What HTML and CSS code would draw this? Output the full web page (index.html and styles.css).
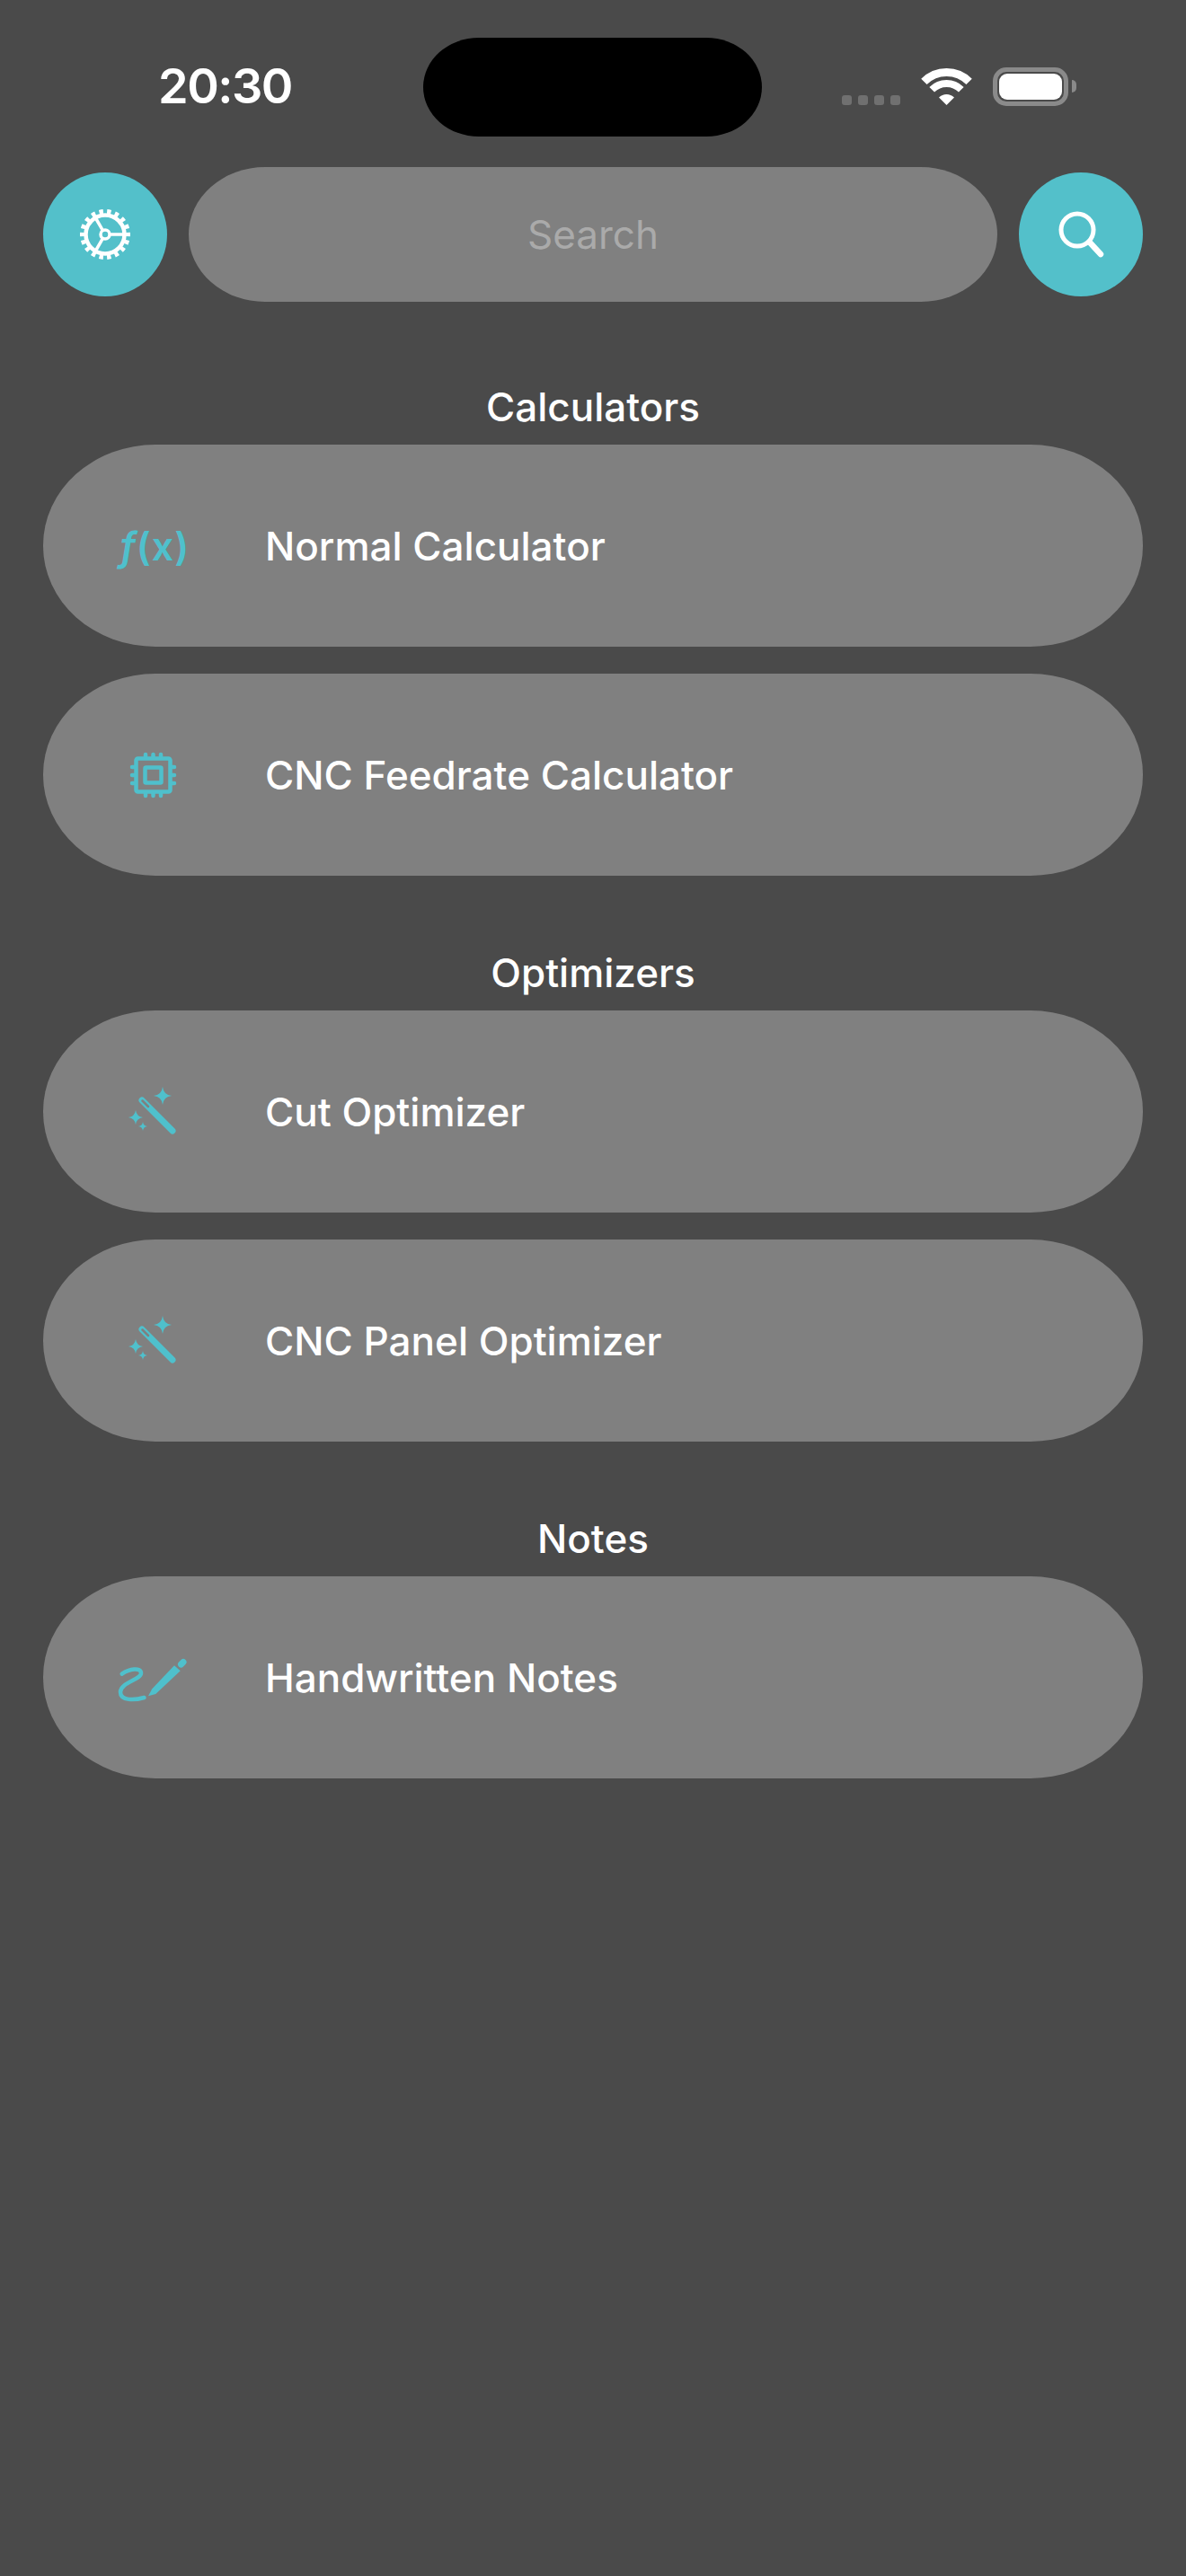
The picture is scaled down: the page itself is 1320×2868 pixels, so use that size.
FILE: index.html
```html
<!doctype html>
<html lang="en">
<head>
    <title>Tools</title>
    <link rel="stylesheet" href="styles.css">
</head>
<body>
    <div class="status-bar">
        <div class="time">20:30</div>
        <div class="island"></div>
        <div class="status-icons">
            <div class="signal"><span></span><span></span><span></span><span></span></div>
            <svg class="wifi" width="57" height="42" viewBox="0 0 57 42">
                <path d="M3.4 15.9A35.5 35.5 0 0 1 53.6 15.9" fill="none" stroke="#fff" stroke-width="9"/>
                <path d="M12.2 24.7A23 23 0 0 1 44.8 24.7" fill="none" stroke="#fff" stroke-width="8"/>
                <path d="M28.5 42L20 33.5A12 12 0 0 1 37 33.5Z" fill="#fff"/>
            </svg>
            <div class="battery"><div class="battery-fill"></div></div>
            <div class="battery-nub"></div>
        </div>
    </div>

    <div class="toolbar">
        <button class="round-btn">
            <svg width="60" height="60" viewBox="-30 -30 60 60" fill="none" stroke="#fff">
                <circle r="21.5" stroke-width="4.5"/>
                <circle r="25.5" stroke-width="5" pathLength="36" stroke-dasharray="1 1" stroke-dashoffset="0.5"/>
                <circle r="5" stroke-width="3.5"/>
                <path d="M6 0H22M-3 -5.2L-11 -19M-3 5.2L-11 19" stroke-width="3.5"/>
            </svg>
        </button>
        <div class="search">Search</div>
        <button class="round-btn">
            <svg width="60" height="60" viewBox="0 0 60 60" fill="none" stroke="#fff" stroke-linecap="round">
                <circle cx="26" cy="25" r="18" stroke-width="5"/>
                <path d="M40 39L52 52" stroke-width="6.500"/>
            </svg>
        </button>
    </div>

    <section class="group">
        <h2>Calculators</h2>
        <div class="row">
            <div class="row-icon"><span class="fx"><i>f</i>(x)</span></div>
            <span class="row-title">Normal Calculator</span>
        </div>
        <div class="row">
            <div class="row-icon">
                <svg width="80" height="80" viewBox="0 0 80 80" fill="none" stroke="#4fc0cc" stroke-width="4.500">
                    <rect x="21.500" y="21.500" width="38" height="37" rx="2"/>
                    <rect x="31.500" y="31.500" width="18" height="17" rx="1"/>
                    <path d="M32 20V17M40.500 20V17M49 20V17M32 60V63M40.500 60V63M49 60V63M20 31H17M20 40H17M20 49H17M61 31H64M61 40H64M61 49H64" stroke-linecap="round"/>
                </svg>
            </div>
            <span class="row-title">CNC Feedrate Calculator</span>
        </div>
    </section>

    <section class="group">
        <h2>Optimizers</h2>
        <div class="row">
            <div class="row-icon">
                <svg width="80" height="80" viewBox="0 0 80 80">
                    <use href="#wand"/>
                </svg>
            </div>
            <span class="row-title">Cut Optimizer</span>
        </div>
        <div class="row">
            <div class="row-icon">
                <svg width="80" height="80" viewBox="0 0 80 80">
                    <use href="#wand"/>
                </svg>
            </div>
            <span class="row-title">CNC Panel Optimizer</span>
        </div>
    </section>

    <section class="group">
        <h2>Notes</h2>
        <div class="row">
            <div class="row-icon">
                <svg width="80" height="80" viewBox="0 0 80 80">
                    <path d="M5.700 35.700C14 30 27 28 27 35C27 42 4 45 4 56C4 66 20 65 30.500 62" fill="none" stroke="#4fc0cc" stroke-width="4.500" stroke-linecap="round"/>
                    <path d="M35 60.300L39.300 52.300L64 26.300L70.700 32.300L43.300 58Z" fill="#4fc0cc"/>
                    <path d="M71.500 25L74 22.500" stroke="#4fc0cc" stroke-width="7" stroke-linecap="round"/>
                </svg>
            </div>
            <span class="row-title">Handwritten Notes</span>
        </div>
    </section>

    <!-- shared magic wand icon -->
    <svg class="defs" width="0" height="0">
        <defs>
            <g id="wand" fill="#4fc0cc">
                <path d="M28 27L62 61" stroke="#4fc0cc" stroke-width="7" stroke-linecap="round"/>
                <path d="M28.500 27.500L35 34" stroke="#808080" stroke-width="2.500" stroke-linecap="round"/>
                <path d="M51 12Q52 21 61 22Q52 23 51 32Q50 23 41 22Q50 21 51 12Z"/>
                <path d="M21 38Q22 45 29 46Q22 47 21 54Q20 47 13 46Q20 45 21 38Z"/>
                <path d="M29 51Q29.500 55.500 34 56Q29.500 56.500 29 61Q28.500 56.500 24 56Q28.500 55.500 29 51Z"/>
            </g>
        </defs>
    </svg>
</body>
</html>
```

FILE: styles.css
```css
* {
    box-sizing: border-box;
}
body {
    margin: 0;
    height: 2868px;
    overflow: hidden;
    background: #4a4a4a;
    color: #fff;
    font-family: Inter, "Liberation Sans", sans-serif;
}
.status-bar {
    display: flex;
    align-items: flex-end;
    height: 152px;
}
.time {
    width: 471px;
    padding-bottom: 26px;
    padding-left: 176px;
    font-size: 54px;
    line-height: 60px;
    font-weight: 600;
    letter-spacing: -1.5px;
}
.island {
    width: 377px;
    height: 110px;
    background: #000;
    border-radius: 62px / 55px;
}
.status-icons {
    display: flex;
    align-items: flex-end;
    padding-left: 89px;
    padding-bottom: 34px;
}
.signal {
    display: flex;
    gap: 7px;
    margin-bottom: 1px;
}
.signal span {
    width: 11px;
    height: 11px;
    border-radius: 3px;
    background: #707070;
}
.wifi {
    margin-left: 23px;
    margin-bottom: 1px;
}
.battery {
    width: 84px;
    height: 43px;
    margin-left: 23px;
    padding: 2px;
    border: 5px solid #8a8a8a;
    border-radius: 15px;
}
.battery-fill {
    height: 100%;
    background: #fff;
    border-radius: 9px;
}
.battery-nub {
    width: 5px;
    height: 14px;
    margin-left: 4px;
    margin-bottom: 15px;
    background: #8a8a8a;
    border-radius: 0 5px 5px 0;
}
.toolbar {
    display: flex;
    align-items: center;
    gap: 24px;
    margin-top: 34px;
    padding: 0 48px;
}
.round-btn {
    display: flex;
    align-items: center;
    justify-content: center;
    flex: none;
    width: 138px;
    height: 138px;
    padding: 0;
    border: 0;
    border-radius: 50%;
    background: #53c0ca;
}
.search {
    flex: 1;
    height: 150px;
    line-height: 150px;
    text-align: center;
    font-size: 44px;
    color: #aaaaaa;
    background: #808080;
    border-radius: 85px / 75px;
}
.group {
    display: flex;
    flex-direction: column;
    gap: 30px;
    margin-top: 81px;
    padding: 0 48px;
}
.group:first-of-type {
    margin-top: 90px;
}
.group h2 {
    margin: 0 0 -15px;
    font-size: 44px;
    line-height: 54px;
    font-weight: 500;
    text-align: center;
}
.row {
    display: flex;
    align-items: center;
    height: 225px;
    padding-left: 82px;
    background: #808080;
    border-radius: 125px / 112px;
}
.row-icon {
    display: flex;
    align-items: center;
    justify-content: center;
    flex: none;
    width: 80px;
    height: 80px;
    margin-right: 85px;
}
.row-title {
    font-size: 44px;
    font-weight: 500;
}
.fx {
    margin-left: 5px;
    font-size: 43px;
    font-weight: 600;
    letter-spacing: 1px;
    color: #4fc0cc;
    white-space: nowrap;
}
.defs {
    position: absolute;
}
```
